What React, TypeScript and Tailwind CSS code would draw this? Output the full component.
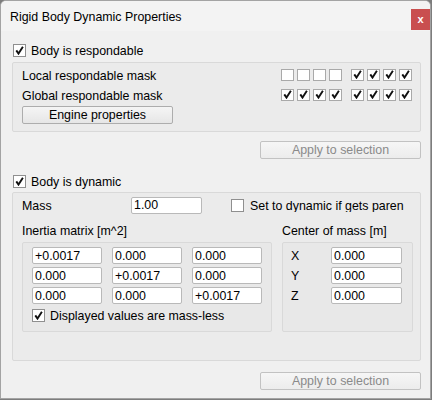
import { ReactNode } from 'react';

const font = "font-['Liberation_Sans',Arial,sans-serif]";

// Small Windows-style checkbox with a heavy tick
const CheckBox = ({ checked, small = false }: { checked: boolean; small?: boolean }) => (
  <span
    className={
      small
        ? 'flex w-[13px] h-[12px] shrink-0 items-center justify-center border border-[#a9a9a9] bg-white'
        : 'flex w-[13px] h-[13px] shrink-0 items-center justify-center border border-[#8f8f8f] bg-white'
    }
  >
    {checked && (
      <svg width="9" height="9" viewBox="0 0 9 9">
        <path d="M1.3 4.4 L3.5 7.6 L7.9 0.8" fill="none" stroke="#111" strokeWidth="1.9" />
      </svg>
    )}
  </span>
);

const Field = ({ value, w = 'w-[70px]' }: { value: string; w?: string }) => (
  <div className={`${w} h-[17px] flex shrink-0 items-center rounded-[2px] border border-[#b9b9b9] bg-white pl-[2px] pt-[1px] text-[12.4px] leading-none text-black`}>
    {value}
  </div>
);

const Button = ({ children, disabled = false, className = '' }: { children: ReactNode; disabled?: boolean; className?: string }) => (
  <div
    className={`flex h-[18px] items-center justify-center rounded-[2px] border pt-[1px] text-[12.4px] leading-none ${
      disabled
        ? 'border-[#c2c2c2] bg-gradient-to-b from-[#f6f6f6] to-[#ececec] text-[#8a8a8a]'
        : 'border-[#adadad] bg-gradient-to-b from-[#f5f5f5] to-[#e6e6e6] text-black'
    } ${className}`}
  >
    {children}
  </div>
);

const MaskRow = ({ bits }: { bits: boolean[] }) => (
  <div className="flex items-center">
    <div className="flex gap-[3px]">
      {bits.slice(0, 4).map((b, i) => (
        <CheckBox key={i} checked={b} small />
      ))}
    </div>
    <div className="ml-[9px] flex gap-[3px]">
      {bits.slice(4).map((b, i) => (
        <CheckBox key={i} checked={b} small />
      ))}
    </div>
  </div>
);

const inertia = [
  ['+0.0017', '0.000', '0.000'],
  ['0.000', '+0.0017', '0.000'],
  ['0.000', '0.000', '+0.0017'],
];

export default function App() {
  return (
    <div className={`${font} h-[400px] w-[432px] bg-[#7d7d7d] text-black`}>
      <div className="flex h-[399px] w-[431px] flex-col overflow-hidden rounded-t-[6px] border border-[#a3a3a3] bg-[#f0f0f0]">
        {/* title bar */}
        <div className="flex h-[30px] items-start justify-between bg-[#f3f3f3]">
          <span className="mt-[8px] pl-[9px] text-[12.4px] leading-[16px]">Rigid Body Dynamic Properties</span>
          <span className="mt-[8px] flex h-[21px] w-[19px] items-center justify-center bg-[#c94f4f] text-[11px] font-bold leading-none text-white">
            x
          </span>
        </div>

        <div className="flex flex-col pl-[11px] pr-[9px]">
          {/* respondable */}
          <div className="mt-[13px] flex h-[13px] items-center gap-[5px] pl-[1px]">
            <CheckBox checked />
            <span className="pt-[2px] text-[12.4px] leading-none">Body is respondable</span>
          </div>
          <div className="mt-[5px] flex h-[70px] flex-col rounded-[2px] border border-[#d9d9d9] bg-[#ebebeb] pl-[9px] pr-[8px] pt-[5px]">
            <div className="flex h-[13px] items-center justify-between">
              <span className="pt-[4px] text-[12.4px] leading-none">Local respondable mask</span>
              <MaskRow bits={[false, false, false, false, true, true, true, true]} />
            </div>
            <div className="mt-[7px] flex h-[13px] items-center justify-between">
              <span className="pt-[4px] text-[12.4px] leading-none">Global respondable mask</span>
              <MaskRow bits={[true, true, true, true, true, true, true, true]} />
            </div>
            <Button className="mt-[5px] w-[151px]">Engine properties</Button>
          </div>
          <div className="mt-[9px] flex justify-end">
            <Button disabled className="w-[161px]">Apply to selection</Button>
          </div>

          {/* dynamic */}
          <div className="mt-[16px] flex h-[13px] items-center gap-[5px] pl-[1px]">
            <CheckBox checked />
            <span className="pt-[2px] text-[12.4px] leading-none">Body is dynamic</span>
          </div>
          <div className="mt-[4px] flex h-[169px] flex-col rounded-[2px] border border-[#d9d9d9] bg-[#ebebeb] pl-[9px] pr-[8px]">
            <div className="mt-[3px] flex h-[18px] items-center">
              <span className="w-[109px] pt-[2px] text-[12.4px] leading-none">Mass</span>
              <Field value="1.00" w="w-[71px]" />
              <div className="ml-[29px] flex items-center gap-[6px] overflow-hidden whitespace-nowrap">
                <CheckBox checked={false} />
                <span className="pt-[2px] text-[12.4px] leading-none">Set to dynamic if gets paren</span>
              </div>
            </div>
            <div className="mt-[10px] flex">
              <div className="flex w-[250px] shrink-0 flex-col">
                <span className="h-[14px] text-[12.4px] leading-[15px]">Inertia matrix [m^2]</span>
                <div className="mt-[4px] flex h-[90px] flex-col gap-[3px] rounded-[2px] border border-[#d9d9d9] bg-[#e8e8e8] pl-[9px] pt-[4px]">
                  {inertia.map((row, r) => (
                    <div key={r} className="flex gap-[10px]">
                      {row.map((v, c) => (
                        <Field key={c} value={v} />
                      ))}
                    </div>
                  ))}
                  <div className="mt-[2px] flex h-[13px] items-center gap-[5px]">
                    <CheckBox checked />
                    <span className="pt-[2px] text-[12.4px] leading-none">Displayed values are mass-less</span>
                  </div>
                </div>
              </div>
              <div className="ml-[10px] flex w-[131px] shrink-0 flex-col">
                <span className="h-[14px] text-[12.4px] leading-[15px]">Center of mass [m]</span>
                <div className="mt-[4px] flex h-[90px] flex-col gap-[3px] rounded-[2px] border border-[#d9d9d9] bg-[#e8e8e8] pl-[8px] pt-[4px]">
                  {['X', 'Y', 'Z'].map((axis) => (
                    <div key={axis} className="flex items-center">
                      <span className="w-[40px] pt-[2px] text-[12.4px] leading-none">{axis}</span>
                      <Field value="0.000" w="w-[71px]" />
                    </div>
                  ))}
                </div>
              </div>
            </div>
          </div>
          <div className="mt-[11px] flex justify-end">
            <Button disabled className="w-[161px]">Apply to selection</Button>
          </div>
        </div>
      </div>
    </div>
  );
}
